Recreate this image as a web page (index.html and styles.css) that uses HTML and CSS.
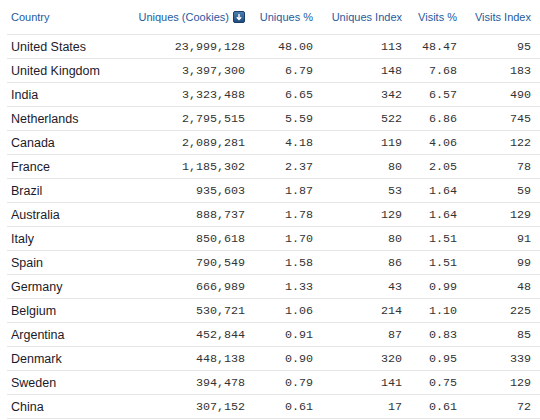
FILE: index.html
```html
<!DOCTYPE html>
<html>
<head>
  <title>Country Audience</title>
  <link rel="stylesheet" href="styles.css">
</head>
<body>
  <table class="stats">
    <colgroup>
      <col class="c-country">
      <col class="c-uniques">
      <col class="c-upct">
      <col class="c-uidx">
      <col class="c-vpct">
      <col class="c-vidx">
    </colgroup>
    <thead>
      <tr>
        <th class="name">Country</th>
        <th>Uniques (Cookies) <span class="sort"><svg width="12" height="12" viewBox="0 0 12 12"><defs><linearGradient id="g" x1="0" y1="0" x2="0" y2="1"><stop offset="0" stop-color="#4f7fb0"/><stop offset="1" stop-color="#1d4a7c"/></linearGradient></defs><rect x="0.5" y="0.5" width="11" height="11" rx="1.5" fill="url(#g)" stroke="#1a3f6a"/><path d="M6 3v5.5M3.8 6.3L6 8.6l2.2-2.3" stroke="#fff" stroke-width="1.4" fill="none"/></svg></span></th>
        <th>Uniques %</th>
        <th>Uniques Index</th>
        <th>Visits %</th>
        <th>Visits Index</th>
      </tr>
    </thead>
    <tbody>
      <tr><td class="name">United States</td><td>23,999,128</td><td>48.00</td><td>113</td><td>48.47</td><td>95</td></tr>
      <tr><td class="name">United Kingdom</td><td>3,397,300</td><td>6.79</td><td>148</td><td>7.68</td><td>183</td></tr>
      <tr><td class="name">India</td><td>3,323,488</td><td>6.65</td><td>342</td><td>6.57</td><td>490</td></tr>
      <tr><td class="name">Netherlands</td><td>2,795,515</td><td>5.59</td><td>522</td><td>6.86</td><td>745</td></tr>
      <tr><td class="name">Canada</td><td>2,089,281</td><td>4.18</td><td>119</td><td>4.06</td><td>122</td></tr>
      <tr><td class="name">France</td><td>1,185,302</td><td>2.37</td><td>80</td><td>2.05</td><td>78</td></tr>
      <tr><td class="name">Brazil</td><td>935,603</td><td>1.87</td><td>53</td><td>1.64</td><td>59</td></tr>
      <tr><td class="name">Australia</td><td>888,737</td><td>1.78</td><td>129</td><td>1.64</td><td>129</td></tr>
      <tr><td class="name">Italy</td><td>850,618</td><td>1.70</td><td>80</td><td>1.51</td><td>91</td></tr>
      <tr><td class="name">Spain</td><td>790,549</td><td>1.58</td><td>86</td><td>1.51</td><td>99</td></tr>
      <tr><td class="name">Germany</td><td>666,989</td><td>1.33</td><td>43</td><td>0.99</td><td>48</td></tr>
      <tr><td class="name">Belgium</td><td>530,721</td><td>1.06</td><td>214</td><td>1.10</td><td>225</td></tr>
      <tr><td class="name">Argentina</td><td>452,844</td><td>0.91</td><td>87</td><td>0.83</td><td>85</td></tr>
      <tr><td class="name">Denmark</td><td>448,138</td><td>0.90</td><td>320</td><td>0.95</td><td>339</td></tr>
      <tr><td class="name">Sweden</td><td>394,478</td><td>0.79</td><td>141</td><td>0.75</td><td>129</td></tr>
      <tr><td class="name">China</td><td>307,152</td><td>0.61</td><td>17</td><td>0.61</td><td>72</td></tr>
    </tbody>
  </table>
</body>
</html>
```

FILE: styles.css
```css
html{ font-family: "Liberation Sans", Arial, sans-serif; }
body{ margin: 0; background-color: #ffffff; }

.stats{ margin-left: 7px; width: 533px; border-collapse: collapse; table-layout: fixed; }

.c-country{ width: 123px; }
.c-uniques{ width: 124px; }
.c-upct{ width: 68px; }
.c-uidx{ width: 89px; }
.c-vpct{ width: 55px; }
.c-vidx{ width: 74px; }

.stats th{ height: 33px; padding: 0 9px 1px 4px; font-size: 11px; font-weight: normal; color: #1f5a9e; text-align: right; white-space: nowrap; border-bottom: 1px #e6e6e6 solid; }
.stats td{ height: 23px; padding: 0 9px 0 4px; font-family: "Liberation Mono", "Courier New", monospace; font-size: 11.7px; color: #333333; text-align: right; white-space: nowrap; border-bottom: 1px #e6e6e6 solid; }

.stats .name{ text-align: left; }
.stats td.name{ font-family: "Liberation Sans", Arial, sans-serif; font-size: 12.5px; color: #1c1a2a; }

.sort{ display: inline-block; vertical-align: -2px; margin-left: 1px; }
.sort svg{ display: block; }
```
